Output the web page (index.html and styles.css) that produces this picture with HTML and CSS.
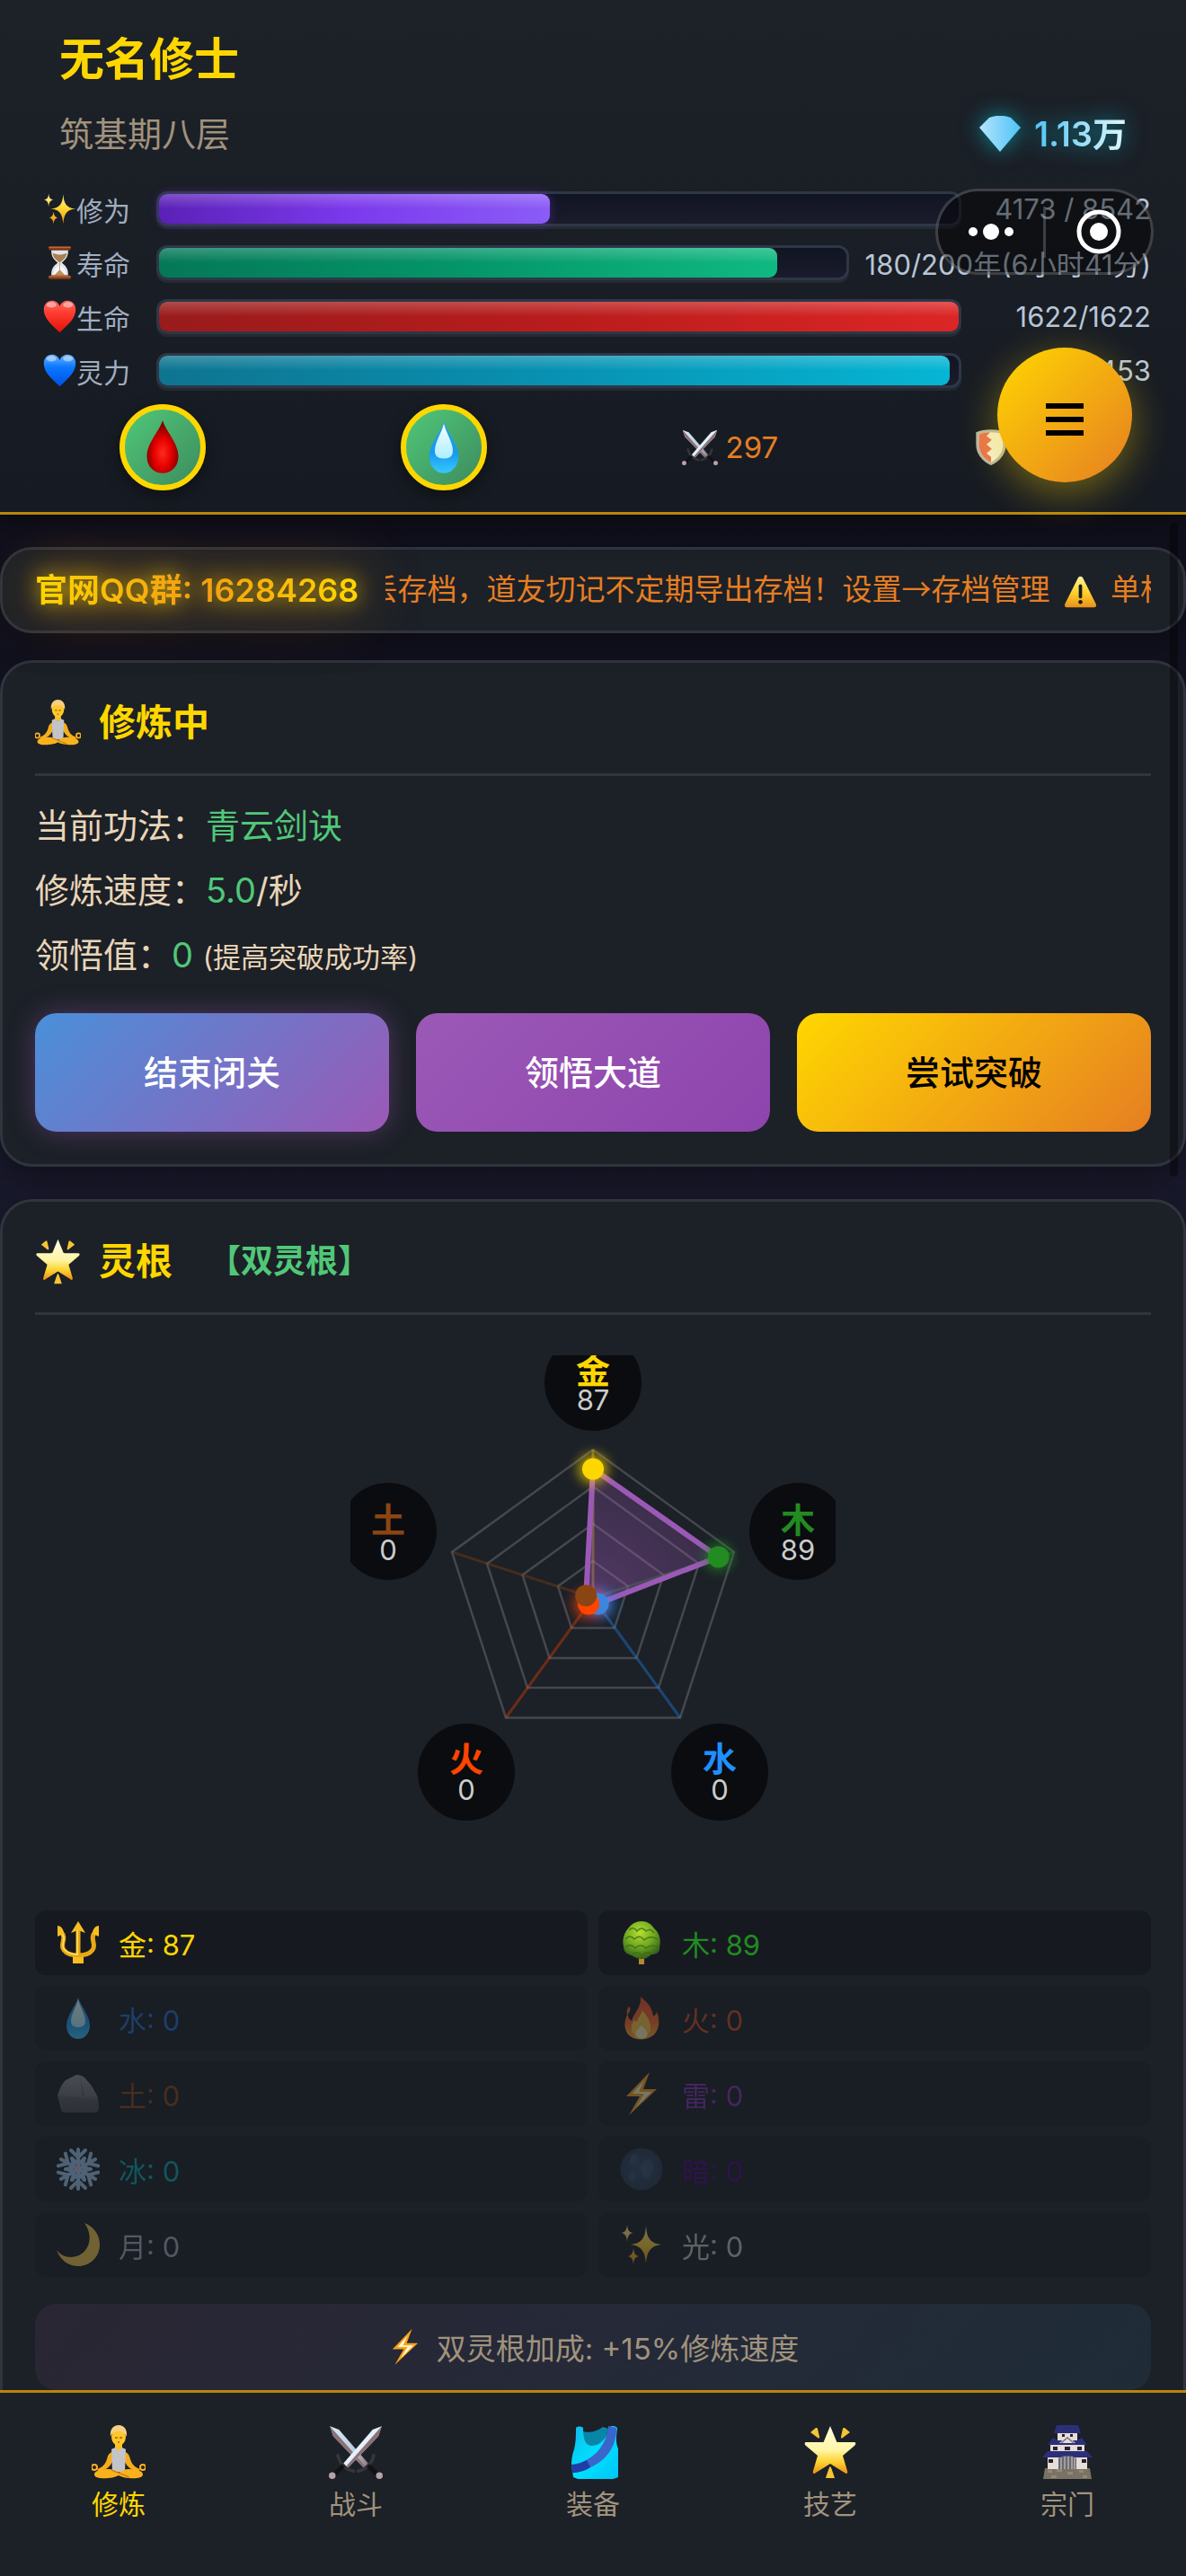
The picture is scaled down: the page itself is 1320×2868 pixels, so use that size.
FILE: index.html
```html
<!DOCTYPE html>
<html lang="zh-CN">
<head>
  <meta charset="UTF-8" />
  <meta name="viewport" content="width=device-width, initial-scale=1.0"/>
  <title>修仙</title>
  <link rel="stylesheet" href="styles.css">
</head>
<body>
  <!-- icon sprite -->
  <svg class="sprite" aria-hidden="true">
    <defs>
      <linearGradient id="gGold" x1="0" y1="0" x2="0" y2="1"><stop offset="0" stop-color="#fff3a0"/><stop offset=".5" stop-color="#ffd42e"/><stop offset="1" stop-color="#e8901a"/></linearGradient>
      <linearGradient id="gStar" x1="0" y1="0" x2="0" y2="1"><stop offset="0" stop-color="#fffbe0"/><stop offset=".5" stop-color="#fff6a8"/><stop offset=".75" stop-color="#fdd433"/><stop offset="1" stop-color="#ee8d14"/></linearGradient>
      <linearGradient id="gRed" x1="0" y1="0" x2="0" y2="1"><stop offset="0" stop-color="#ff6a60"/><stop offset=".4" stop-color="#ff3b30"/><stop offset="1" stop-color="#e01208"/></linearGradient>
      <linearGradient id="gBlue" x1="0" y1="0" x2="0" y2="1"><stop offset="0" stop-color="#6cb2ff"/><stop offset=".4" stop-color="#0a78ff"/><stop offset="1" stop-color="#0050e6"/></linearGradient>
      <radialGradient id="gBlood" cx=".5" cy=".62" r=".55"><stop offset="0" stop-color="#ff2a20"/><stop offset=".5" stop-color="#e60000"/><stop offset="1" stop-color="#7a0000"/></radialGradient>
      <linearGradient id="gWater" x1="0" y1="0" x2="0" y2="1"><stop offset="0" stop-color="#2b9fe8"/><stop offset=".6" stop-color="#1699ee"/><stop offset="1" stop-color="#38c8ff"/></linearGradient>
      <linearGradient id="gShine" x1="0" y1="0" x2="0" y2="1"><stop offset="0" stop-color="#f4ffff"/><stop offset="1" stop-color="#aeeeff"/></linearGradient>
      <linearGradient id="gGem"><stop offset="0" stop-color="#b3e5fc"/><stop offset="1" stop-color="#4fc3f7"/></linearGradient>
      <radialGradient id="gTree" cx=".45" cy=".3" r=".7"><stop offset="0" stop-color="#b4e030"/><stop offset=".55" stop-color="#6fa822"/><stop offset="1" stop-color="#34601a"/></radialGradient>
      <linearGradient id="gFire" x1="0" y1="0" x2="0" y2="1"><stop offset="0" stop-color="#f0482c"/><stop offset=".6" stop-color="#fb6a22"/><stop offset="1" stop-color="#ffb42a"/></linearGradient>
      <linearGradient id="gRock" x1="0" y1="0" x2="0" y2="1"><stop offset="0" stop-color="#8c9094"/><stop offset=".6" stop-color="#686c70"/><stop offset="1" stop-color="#4c5054"/></linearGradient>
      <radialGradient id="gMoon"><stop offset="0" stop-color="#304a68"/><stop offset="1" stop-color="#26394f"/></radialGradient>
      <linearGradient id="gVest" x1="0" y1="0" x2="1" y2="1"><stop offset="0" stop-color="#12b8e8"/><stop offset=".5" stop-color="#00e0ff"/><stop offset="1" stop-color="#00c2f5"/></linearGradient>
      <linearGradient id="gBlade"><stop offset="0" stop-color="#d8ecfa"/><stop offset=".6" stop-color="#bcd0e0"/><stop offset="1" stop-color="#8d7880"/></linearGradient>
      <radialGradient id="gRadar" cx="270" cy="270" r="165" gradientUnits="userSpaceOnUse"><stop offset="0" stop-color="#9b59b6" stop-opacity=".42"/><stop offset="1" stop-color="#9b59b6" stop-opacity=".2"/></radialGradient>
      <filter id="glow" x="-100%" y="-100%" width="300%" height="300%"><feGaussianBlur stdDeviation="7"/></filter>
    </defs>
    <symbol id="i-sparkles" viewBox="0 0 48 48">
      <path fill="url(#gGold)" d="M29 3c1 13 4 20 18 21-14 1-17 9-18 22-1-13-4-21-18-22 14-1 17-8 18-21zM8 2c.6 6 2 8.500 7 9-5 .5-6.400 4-7 10-.6-6-2-9.500-7-10 5-.5 6.400-3 7-9zM15 28c.6 5.500 2 8 6 9-4 1-5.400 3.500-6 9-.6-5.500-2-8-6-9 4-1 5.400-3.500 6-9z"/>
    </symbol>
    <symbol id="i-hourglass" viewBox="0 0 48 48">
      <path fill="#dfe3ea" d="M12 4h24c1 11-3 15-9 20 6 5 10 9 9 20H12c-1-11 3-15 9-20-6-5-10-9-9-20z"/>
      <path fill="#a87f52" d="M14 10c6 3 14 3 20 0 0 6-4 9-9 13h-2c-5-4-9-7-9-13z"/>
      <path fill="#f6f7ff" d="M16 42c-2-7 3-12 8-15 5 3 10 8 8 15z"/>
      <path fill="#c09253" d="M16 42l8-8 8 8zM23.500 22h1v14h-1z"/>
      <rect x="8" y="0" width="32" height="6" rx="2" fill="#7a3716"/><rect x="8" y="1" width="32" height="2" rx="1" fill="#bc6a3e"/>
      <rect x="8" y="42" width="32" height="6" rx="2" fill="#7a3716"/><rect x="8" y="43" width="32" height="2" rx="1" fill="#bc6a3e"/>
    </symbol>
    <symbol id="i-heart" viewBox="0 0 48 48">
      <path d="M24 47C11 35 1 26 1 14 1 6 6 1 13 1c5 0 9 3 11 8 2-5 6-8 11-8 7 0 12 5 12 13 0 12-10 21-23 33z"/>
      <ellipse cx="12" cy="7" rx="7" ry="4" fill="#fff" opacity=".45"/><ellipse cx="36" cy="7" rx="7" ry="4" fill="#fff" opacity=".45"/>
    </symbol>
    <symbol id="i-blood" viewBox="0 0 48 48"><path fill="url(#gBlood)" d="M24 0c3 10 14 20 14 32 0 9-6 15-14 15s-14-6-14-15C10 20 21 10 24 0z"/></symbol>
    <symbol id="i-water" viewBox="0 0 48 48">
      <path fill="url(#gWater)" d="M24 1c3 10 13 20 13 31 0 9-6 15-13 15s-13-6-13-15C11 21 21 11 24 1z"/>
      <path fill="url(#gShine)" d="M24 3c2 8 8 17 8 24 0 5-3 7-8 7s-8-2-8-7c0-7 6-16 8-24z"/>
    </symbol>
    <symbol id="i-swords" viewBox="0 0 48 48">
      <path fill="url(#gBlade)" d="M1 1l8 3 26 30-4 4L4 10z"/><path fill="#8d7076" d="M1 1l3 9 27 28 1-2z"/>
      <path fill="#e2f1fb" d="M47 1l-8 3-26 30 4 4L44 10z"/><path fill="#8d7076" d="M47 1l-3 9-27 28-1-2z"/>
      <path d="M8 27c2 8 6 12 14 14M40 27c-2 8-6 12-14 14" fill="none" stroke="#34363a" stroke-width="3" stroke-linecap="round"/>
      <path d="M13 36l-9 9M35 36l9 9" stroke="#101216" stroke-width="4"/>
      <circle cx="3" cy="45" r="3" fill="#b9a0a8"/><circle cx="45" cy="45" r="3" fill="#b9a0a8"/>
    </symbol>
    <symbol id="i-shield" viewBox="0 0 48 48">
      <path fill="#b8b6a4" d="M4 4C14-1 34-1 44 4v16c0 14-10 24-20 28C14 44 4 34 4 20z"/>
      <path fill="#f3eecd" d="M8 7c9-4 23-4 32 0v13c0 12-8 20-16 24C16 40 8 32 8 20z"/>
      <path fill="#e8714c" d="M8 7c5-2 9-3 15-3l-5 5 7 5-7 6 7 6-7 6 6 5v7C16 40 8 32 8 20z"/>
    </symbol>
    <symbol id="i-lotus" viewBox="0 0 60 60">
      <path fill="#f5ad1c" d="M24 30c-4 0-6 3-7 8-2 6-5 9-11 11l2 3c8-2 12-5 15-11zM36 30c4 0 6 3 7 8 2 6 5 9 11 11l-2 3c-8-2-12-5-15-11z"/>
      <path fill="#ffc01e" d="M26 18h8v10h-8z"/>
      <path fill="#c2c4c8" d="M22 27c2-1 3-2 5-2 1 4 5 4 6 0 2 0 3 1 5 2l-1 25H23z"/>
      <path fill="#f9b21d" d="M20 49c-8 0-17 1-17 6 0 6 20 5 27 1 7 4 27 5 27-1 0-5-9-6-17-6-4 0-7 3-10 4-3-1-6-4-10-4z"/>
      <path d="M22 50l20 8" stroke="#cf8411" stroke-width="1.500"/>
      <circle cx="3" cy="47" r="3" fill="none" stroke="#f9b21d" stroke-width="2"/><circle cx="57" cy="47" r="3" fill="none" stroke="#f9b21d" stroke-width="2"/>
      <ellipse cx="30" cy="13" rx="8" ry="10" fill="#ffc72c"/>
      <path fill="#f6cf83" d="M21 13c-1-8 3-13 9-13s10 5 9 13c-2-5-6-6-10-6s-7 2-8 6z"/>
      <path d="M26 14h3M31 14h3M29 19h2" stroke="#a0610c" stroke-width="1.300"/>
    </symbol>
    <symbol id="i-star" viewBox="0 0 60 60">
      <path fill="url(#gStar)" d="M30 1l7 17c0 1 1 1 2 1h17c3 0 3 2 1 4L44 34l5 17c1 3-1 4-3 2L30 43 14 53c-2 2-4 1-3-2l5-17L3 23c-2-2-2-4 1-4h17c1 0 2 0 2-1z"/>
      <path fill="#f5c535" d="M8 8l6-5c1 0 2 0 2 1l2 9c0 2-1 2-2 1zM52 8l-6-5c-1 0-2 0-2 1l-2 9c0 2 1 2 2 1zM30 46c1 0 4 10 5 13H25c1-3 4-13 5-13z"/>
    </symbol>
    <symbol id="i-trident" viewBox="0 0 48 48">
      <path d="M24 8v32M5 12c7 7-2 14 3 20 3 4 9 6 16 6s13-2 16-6c5-6-4-13 3-20" fill="none" stroke="#e9a714" stroke-width="5"/>
      <path d="M23 8v30M6 14c6 6-3 12 3 18 3 3 8 5 15 5" fill="none" stroke="#ffe46b" stroke-width="1.500"/>
      <path fill="#f7bd22" d="M24 0l8 13-8-3-8 3zM1 5c4 0 7 4 7 9l-7 3zM47 5c-4 0-7 4-7 9l7 3zM18 40h12v7H18z"/>
    </symbol>
    <symbol id="i-tree" viewBox="0 0 48 48">
      <path fill="#b8862c" d="M21 38h6v10h-6z"/>
      <path fill="url(#gTree)" d="M24 0c6 0 11 3 14 8 6 5 8 13 6 21 1 6-4 8-9 8-3 3-7 5-11 5s-8-2-11-4c-5-1-9-4-9-10C2 20 5 12 10 7c3-4 8-7 14-7z"/>
      <g fill="none" stroke="#3d6c14" stroke-width="1.500" opacity=".8"><path d="M10 10q5-5 9 1q5-6 10 0q5-4 9 2M6 20q5-6 10 0q6-6 11 1q6-6 15-1M6 29q6-5 11 1q6-6 12 0q6-5 14-1M14 37q5-5 10 1q5-5 11-2"/></g>
    </symbol>
    <symbol id="i-fire" viewBox="0 0 48 48">
      <path fill="url(#gFire)" d="M23 0c10 8 13 14 14 22 2-1 3-3 4-5 4 9 3 20-4 26-8 6-20 6-27 0-6-6-6-17-1-24 0 4 1 6 4 8 2-8 11-15 10-27zM10 11c3 3 1 6-2 9-1-4 0-7 2-9z"/>
      <path fill="#ffc93c" d="M25 15c6 8 10 14 9 22-2 9-18 11-21 1-1-5 1-9 3-12 2 3 3 2 4-1 2-4 4-6 5-10z"/>
      <path fill="#fff4b8" d="M24 32c5 5 8 8 6 12-3 4-9 4-12 0-2-4 2-8 6-12z"/>
    </symbol>
    <symbol id="i-rock" viewBox="0 0 48 48">
      <path fill="url(#gRock)" d="M10 9l12-6c3 0 7 1 9 3l7 8c3 5 6 9 8 15l1 10c0 4-2 6-4 6H8c-3-1-3-4-4-8L1 26c2-6 4-12 9-17z"/>
      <path fill="#3c4044" opacity=".35" d="M1 26l22 2 23 2 1 9c0 4-2 6-4 6H8zM27 5l4 22h-3z"/>
    </symbol>
    <symbol id="i-bolt" viewBox="0 0 48 48">
      <path fill="#f9a21c" d="M33 0L7 27h15L10 48l31-29H26z"/><path fill="#fffbd0" d="M27 9L14 24h13l-9 15 17-17H21z"/>
    </symbol>
    <symbol id="i-snow" viewBox="0 0 48 48">
      <g id="arm" stroke="#9cc4ea" stroke-width="4" stroke-linecap="round" fill="none"><path d="M24 24V2M16 3l8 8 8-8M17 12l7 7 7-7"/></g>
      <use href="#arm" transform="rotate(60 24 24)"/><use href="#arm" transform="rotate(120 24 24)"/><use href="#arm" transform="rotate(180 24 24)"/><use href="#arm" transform="rotate(240 24 24)"/><use href="#arm" transform="rotate(300 24 24)"/>
      <circle cx="24" cy="24" r="3" fill="#c9b4c4"/>
    </symbol>
    <symbol id="i-newmoon" viewBox="0 0 48 48"><circle cx="24" cy="24" r="23.500" fill="url(#gMoon)"/><path fill="#4a6888" opacity=".35" d="M13 8c6-3 9 2 7 7s-8 6-10 2zM27 15c5-4 11 0 10 7s-4 16-9 12-6-14-1-19zM12 27c4-1 6 3 5 8s-7 2-8-2z"/></symbol>
    <symbol id="i-crescent" viewBox="0 0 48 48"><path fill="#f0c648" d="M31 0c11 4 17 14 17 24 0 14-11 24-24 24C13 48 4 41 0 30c6 8 15 10 25 6 12-6 16-22 6-36z"/></symbol>
    <symbol id="i-vest" viewBox="0 0 60 60">
      <path fill="#0786a8" d="M15 5c8 5 18 3 26-3l6 2-6 22-18 3-9-9z"/>
      <path fill="url(#gVest)" d="M11 3c2-2 6-2 8 0 0 12 2 20 10 20 9 0 17-9 20-21 2-2 6-1 8 1-1 9-2 17 1 23v32c-13 6-37 6-50 0L6 44c0-6 1-12 3-17 2-8 2-16 2-24z"/>
      <path fill="#3a66cc" d="M47 1l9 2c1 27-20 46-49 50l-1-9c22-3 39-19 41-43z"/>
      <path fill="#1f3da4" d="M6 44c7 0 12-2 17-5l4 8c-6 4-13 6-20 6z"/>
    </symbol>
    <symbol id="i-castle" viewBox="0 0 60 60">
      <path fill="#7a7262" d="M5 48h50l2 12H3z"/><path fill="#e6dcd8" d="M8 34h44v15H8zM11 22h38v12H11zM19 9h22v11H19z"/>
      <path fill="#2c2f78" d="M18 0h24l3 9H15zM14 14l-6 8h44l-6-8-5 3H19zM8 29l-6 7h56l-6-7z"/>
      <path fill="#e6dcd8" d="M30 12l9 8H21z"/>
      <path d="M23 20l7-6 7 6" fill="none" stroke="#77727e" stroke-width="1.500"/>
      <path fill="#24242e" d="M24 10h3v3h-3zM33 10h3v3h-3zM14 24h5v4h-5zM27 24h6v4h-6zM41 24h5v4h-5zM9 38h5v4H9zM46 38h5v4h-5z"/>
      <path fill="#696a70" d="M20 37c5-4 15-4 20 0v12H20z"/><path d="M23 36v13M27 35v14M31 35v14M35 35v14M38 36v13" stroke="#d8d2d0" stroke-width="1"/>
      <path fill="#938875" d="M8 50h5v3H8zM18 49h6v3h-6zM30 52h6v3h-6zM43 50h5v3h-5zM12 56h6v3h-6zM47 56h5v3h-5z"/>
    </symbol>
    <symbol id="i-warn" viewBox="0 0 48 48">
      <path fill="url(#gGold)" d="M24 1c2 0 3 1 4 3l19 38c1 3 0 5-3 5H4c-3 0-4-2-3-5L20 4c1-2 2-3 4-3z"/>
      <path d="M24 15v16" stroke="#1a1a1a" stroke-width="5" stroke-linecap="round"/><circle cx="24" cy="39" r="3" fill="#1a1a1a"/>
    </symbol>
    <symbol id="i-gem" viewBox="0 0 46 40"><path fill="url(#gGem)" d="M11 2c8-3 16-3 24 0l11 11-23 27L0 13z"/></symbol>
  </svg>

  <div class="app">
    <header class="header">
      <h1 class="player-name">无名修士</h1>
      <div class="player-row">
        <span class="realm">筑基期八层</span>
        <span class="stones"><svg class="gem"><use href="#i-gem"/></svg><b>1.13万</b></span>
      </div>

      <div class="stats">
        <div class="stat">
          <span class="stat-label"><svg class="icon-sm"><use href="#i-sparkles"/></svg>修为</span>
          <div class="bar"><div class="fill exp" style="width: 48.9%"></div></div>
          <span class="stat-value">4173 / 8542</span>
        </div>
        <div class="stat">
          <span class="stat-label"><svg class="icon-sm"><use href="#i-hourglass"/></svg>寿命</span>
          <div class="bar"><div class="fill life" style="width: 90%"></div></div>
          <span class="stat-value">180/200年(6小时41分)</span>
        </div>
        <div class="stat">
          <span class="stat-label"><svg class="icon-sm red"><use href="#i-heart"/></svg>生命</span>
          <div class="bar"><div class="fill hp" style="width: 100%"></div></div>
          <span class="stat-value">1622/1622</span>
        </div>
        <div class="stat">
          <span class="stat-label"><svg class="icon-sm blue"><use href="#i-heart"/></svg>灵力</span>
          <div class="bar"><div class="fill mp" style="width: 98.9%"></div></div>
          <span class="stat-value">448/453</span>
        </div>
      </div>

      <div class="quick">
        <button class="potion" aria-label="生命药水"><svg><use href="#i-blood"/></svg></button>
        <button class="potion" aria-label="灵力药水"><svg><use href="#i-water"/></svg></button>
        <span class="attr"><svg><use href="#i-swords"/></svg>297</span>
        <span class="attr"><svg><use href="#i-shield"/></svg>148</span>
      </div>
    </header>

    <main class="main">
      <section class="notice">
        <span class="qq">官网QQ群: 16284268</span>
        <div class="ticker"><p class="ticker-text">丢存档，道友切记不定期导出存档！设置<span class="arrow">→</span>存档管理 <svg class="warn"><use href="#i-warn"/></svg> 单机游戏</p></div>
      </section>

      <section class="card">
        <h2 class="card-title"><svg class="icon-title"><use href="#i-lotus"/></svg>修炼中</h2>
        <div class="info">
          <p>当前功法：<span class="green">青云剑诀</span></p>
          <p>修炼速度：<span class="green">5.0</span>/秒</p>
          <p>领悟值：<span class="green">0</span> <small>(提高突破成功率)</small></p>
        </div>
        <div class="actions">
          <button class="btn btn-active">结束闭关</button>
          <button class="btn btn-purple">领悟大道</button>
          <button class="btn btn-gold">尝试突破</button>
        </div>
      </section>

      <section class="card">
        <h2 class="card-title"><svg class="icon-title"><use href="#i-star"/></svg>灵根<span class="root-type">【双灵根】</span></h2>

        <svg class="radar" viewBox="0 0 540 540" role="img" aria-label="灵根雷达图">
          <g fill="none" stroke="#fff" stroke-opacity=".18" stroke-width="2.500">
            <path d="M270 105L427 219L367 403.500H173L113 219z"/>
            <path d="M270 146L388 232L343 370H197L152 232z"/>
            <path d="M270 187.500L348.500 244.500L318.500 337H221.500L191.500 244.500z"/>
            <path d="M270 229L309 257L294 303.500H246L231 257z"/>
          </g>
          <g stroke-width="3" stroke-opacity=".35">
            <path d="M270 270V105" stroke="#ffd700"/><path d="M270 270L427 219" stroke="#228b22"/>
            <path d="M270 270L367 403.500" stroke="#1e90ff"/><path d="M270 270L173 403.500" stroke="#ff4500"/>
            <path d="M270 270L113 219" stroke="#8b4513"/>
          </g>
          <path d="M270 126.400L409.700 224.600L274.900 276.700L265.100 276.700L262.200 267.500z" fill="url(#gRadar)" stroke="#9b59b6" stroke-width="6" stroke-linejoin="round"/>
          <g filter="url(#glow)" opacity=".75">
            <circle cx="270" cy="126.400" r="16" fill="#ffd700"/><circle cx="409.700" cy="224.600" r="15" fill="#228b22"/>
            <circle cx="278" cy="277" r="15" fill="#1e90ff"/><circle cx="264" cy="277" r="15" fill="#ff4500"/>
          </g>
          <circle cx="270" cy="126.400" r="12" fill="#ffd700"/>
          <circle cx="409.700" cy="224.600" r="12" fill="#228b22"/>
          <circle cx="275.500" cy="276.700" r="12" fill="#3d86dd"/>
          <circle cx="265.100" cy="276.700" r="12" fill="#ff4500"/>
          <circle cx="262.200" cy="267.500" r="12" fill="#8b4513"/>
          <g fill="#0a0c0f">
            <circle cx="270" cy="30" r="54"/><circle cx="498" cy="196" r="54"/><circle cx="411" cy="464" r="54"/>
            <circle cx="129" cy="464" r="54"/><circle cx="42" cy="196" r="54"/>
          </g>
          <g class="radar-name">
            <text x="270" y="31">金</text><text x="498" y="197" class="wood">木</text>
            <text x="411" y="463" class="water">水</text><text x="129" y="463" class="fire">火</text>
            <text x="42" y="197" class="earth">土</text>
          </g>
          <g class="radar-value">
            <text x="270" y="61">87</text><text x="498" y="228">89</text><text x="411" y="495">0</text>
            <text x="129" y="495">0</text><text x="42" y="228">0</text>
          </g>
        </svg>

        <div class="roots">
          <div class="root metal"><svg><use href="#i-trident"/></svg>金: 87</div>
          <div class="root wood"><svg><use href="#i-tree"/></svg>木: 89</div>
          <div class="root off water"><svg><use href="#i-water"/></svg>水: 0</div>
          <div class="root off fire"><svg><use href="#i-fire"/></svg>火: 0</div>
          <div class="root off earth"><svg><use href="#i-rock"/></svg>土: 0</div>
          <div class="root off thunder"><svg><use href="#i-bolt"/></svg>雷: 0</div>
          <div class="root off ice"><svg><use href="#i-snow"/></svg>冰: 0</div>
          <div class="root off dark"><svg><use href="#i-newmoon"/></svg>暗: 0</div>
          <div class="root off moon"><svg><use href="#i-crescent"/></svg>月: 0</div>
          <div class="root off light"><svg><use href="#i-sparkles"/></svg>光: 0</div>
        </div>

        <div class="bonus"><svg><use href="#i-bolt"/></svg>双灵根加成: +15%修炼速度</div>
      </section>
    </main>

    <nav class="tabbar">
      <a href="#cultivate" class="tab active"><svg><use href="#i-lotus"/></svg>修炼</a>
      <a href="#battle" class="tab"><svg><use href="#i-swords"/></svg>战斗</a>
      <a href="#equip" class="tab"><svg><use href="#i-vest"/></svg>装备</a>
      <a href="#skill" class="tab"><svg><use href="#i-star"/></svg>技艺</a>
      <a href="#sect" class="tab"><svg><use href="#i-castle"/></svg>宗门</a>
    </nav>

    <div class="scroll-thumb"></div>

    <button class="menu-btn" aria-label="菜单"><span></span><span></span><span></span></button>

    <div class="capsule">
      <button aria-label="更多"><svg viewBox="0 0 54 54"><g fill="#fff"><circle cx="7" cy="27" r="5"/><circle cx="27" cy="27" r="9"/><circle cx="47" cy="27" r="5"/></g></svg></button>
      <button aria-label="关闭"><svg viewBox="0 0 54 54"><circle cx="27" cy="27" r="22" fill="none" stroke="#fff" stroke-width="5"/><circle cx="27" cy="27" r="10" fill="#fff"/></svg></button>
    </div>
  </div>
</body>
</html>
```
FILE: styles.css
```css
* {
  box-sizing: border-box;
  margin: 0;
  padding: 0;
}

body {
  background: linear-gradient(180deg, #0a0a12 0%, #1a1a2e 50%, #16213e 100%);
  color: #e8d5b7;
  font-family: Inter, "Noto Sans CJK SC", sans-serif;
  font-size: 38px;
}

button {
  border: none;
  font-family: inherit;
  cursor: pointer;
}

svg {
  flex: none;
}

.sprite {
  position: absolute;
  width: 0;
  height: 0;
}

.app {
  position: relative;
  height: 100vh;
  display: flex;
  flex-direction: column;
  overflow: hidden;
}

/* header */
.header {
  position: relative;
  z-index: 2;
  padding: 30px 24px 24px;
  background: linear-gradient(180deg, #1d2128 0%, #161a22 100%);
  border-bottom: 3px solid #b8860b;
  box-shadow: 0 6px 30px rgba(0, 0, 0, 0.5);
}

.player-name {
  padding-left: 42px;
  color: #ffd700;
  font-size: 50px;
  font-weight: 600;
  line-height: 72px;
}

.player-row {
  display: flex;
  justify-content: space-between;
  align-items: center;
  padding: 0 42px;
  margin: 17px 0 34px;
  line-height: 60px;
}

.realm {
  color: #a0937d;
}

.stones {
  display: flex;
  align-items: center;
  gap: 15px;
  filter: drop-shadow(0 0 12px rgba(0, 210, 235, 0.6));
}

.stones b {
  font-weight: 600;
  background: linear-gradient(90deg, #4fc3f7, #e0f7fa);
  -webkit-background-clip: text;
  background-clip: text;
  color: transparent;
}

.gem {
  width: 46px;
  height: 40px;
}

.stats {
  display: grid;
  gap: 21px;
  padding: 0 15px 0 24px;
}

.stat {
  display: flex;
  align-items: center;
  height: 39px;
  font-size: 31px;
}

.stat-label {
  display: flex;
  align-items: center;
  width: 126px;
  color: #a0aec0;
  font-size: 30px;
}

.icon-sm {
  width: 37px;
  height: 37px;
}

.red {
  fill: url(#gRed);
}

.blue {
  fill: url(#gBlue);
}

.bar {
  flex: 1;
  height: 39px;
  border: 3px solid #2d3748;
  border-radius: 12px;
  background: linear-gradient(180deg, #111522, #1a1b2c);
  box-shadow: 0 3px 0 rgba(255, 255, 255, 0.06);
}

.fill {
  height: 100%;
  border-radius: 9px;
}

.exp {
  background: linear-gradient(180deg, rgba(255, 255, 255, 0.22), transparent 50%), linear-gradient(90deg, #5b21b6, #7c3aed 50%, #8b5cf6);
  box-shadow: 0 0 12px rgba(124, 58, 237, 0.4);
}

.life {
  background: linear-gradient(180deg, rgba(255, 255, 255, 0.22), transparent 50%), linear-gradient(90deg, #047857, #059669 50%, #10b981);
}

.hp {
  background: linear-gradient(180deg, rgba(255, 255, 255, 0.22), transparent 50%), linear-gradient(90deg, #991b1b, #b91c1c 50%, #dc2626);
}

.mp {
  background: linear-gradient(180deg, rgba(255, 255, 255, 0.22), transparent 50%), linear-gradient(90deg, #0e7490, #0891b2 50%, #06b6d4);
}

.stat-value {
  min-width: 211px;
  padding-left: 18px;
  color: #b8c5d6;
  text-align: right;
  white-space: nowrap;
}

.quick {
  display: flex;
  justify-content: space-around;
  align-items: center;
  margin-top: 18px;
}

.potion {
  display: grid;
  place-items: center;
  width: 96px;
  height: 96px;
  border: 6px solid #ffd700;
  border-radius: 50%;
  background: linear-gradient(135deg, #50c878, #3d8b5e);
  box-shadow: 0 6px 18px rgba(0, 0, 0, 0.4);
}

.potion svg {
  width: 60px;
  height: 60px;
}

.attr {
  display: flex;
  align-items: center;
  gap: 9px;
  color: #e67e22;
  font-size: 33px;
}

.attr svg {
  width: 40px;
  height: 40px;
}

/* main */
.main {
  flex: 1;
  min-height: 0;
  padding: 36px 0;
  overflow-y: auto;
  scrollbar-width: none;
}

.notice,
.card {
  border: 3px solid #30343c;
  border-radius: 36px;
  background: #1c2027;
  box-shadow: 0 12px 30px rgba(0, 0, 0, 0.35);
}

.notice {
  position: relative;
  display: flex;
  align-items: center;
  gap: 30px;
  height: 96px;
  padding: 0 36px 6px;
  margin-bottom: 30px;
}

.card {
  padding: 36px;
  margin-bottom: 36px;
}

.qq {
  font-size: 36px;
  font-weight: 600;
  white-space: nowrap;
  background: linear-gradient(90deg, #ffd700, #f39c12, #ffd700);
  -webkit-background-clip: text;
  background-clip: text;
  color: transparent;
  filter: drop-shadow(0 0 12px rgba(255, 215, 0, 0.8)) drop-shadow(0 0 33px rgba(255, 140, 0, 0.6));
}

.ticker {
  flex: 1;
  min-width: 0;
  overflow: hidden;
}

.ticker-text {
  color: #e67e22;
  font-size: 33px;
  white-space: nowrap;
  text-indent: -20px;
}

.arrow {
  font-family: "Noto Sans CJK SC", sans-serif;
}

.warn {
  width: 41px;
  height: 36px;
  margin: 0 4px;
  vertical-align: middle;
}

.card-title {
  display: flex;
  align-items: center;
  gap: 20px;
  padding-bottom: 27px;
  border-bottom: 3px solid #30343c;
  color: #ffd700;
  font-size: 41px;
  font-weight: 600;
  line-height: 60px;
}

.icon-title {
  width: 51px;
  height: 51px;
}

.info {
  display: grid;
  gap: 12px;
  margin: 25px 0 32px;
  line-height: 60px;
}

.info small {
  font-size: 31px;
}

.green {
  color: #50c878;
}

.actions {
  display: grid;
  grid-template-columns: repeat(3, 1fr);
  gap: 30px;
}

.btn {
  height: 132px;
  padding-bottom: 6px;
  border-radius: 24px;
  color: #fff;
  font-size: 38px;
  font-weight: 500;
}

.btn-active {
  background: linear-gradient(135deg, #4a90d9, #9b59b6);
  box-shadow: 0 0 30px rgba(155, 89, 182, 0.4);
}

.btn-purple {
  background: linear-gradient(135deg, #9b59b6, #8e44ad);
}

.btn-gold {
  background: linear-gradient(135deg, #ffd700, #e67e22);
  color: #000;
}

.root-type {
  margin-left: 20px;
  color: #50c878;
  font-size: 36px;
}

.radar {
  display: block;
  width: 540px;
  height: 540px;
  margin: 45px auto 78px;
}

.radar text {
  text-anchor: middle;
}

.radar-name {
  fill: #ffd700;
  font-size: 38px;
  font-weight: 700;
}

.radar-name .wood { fill: #228b22; }
.radar-name .water { fill: #1e90ff; }
.radar-name .fire { fill: #ff4500; }
.radar-name .earth { fill: #8b4513; }

.radar-value {
  fill: #ccc;
  font-size: 31px;
}

.roots {
  display: grid;
  grid-template-columns: 1fr 1fr;
  gap: 12px;
}

.root {
  display: flex;
  align-items: center;
  gap: 21px;
  height: 72px;
  padding: 0 24px;
  border-radius: 12px;
  background: #161a20;
  font-size: 31px;
}

.root svg {
  width: 48px;
  height: 48px;
}

.off {
  opacity: 0.4;
}

.metal { color: #ffd700; }
.wood { color: #228b22; }
.water { color: #1e6fd0; }
.fire { color: #d04a1c; }
.earth { color: #8b4513; }
.thunder { color: #7d30b0; }
.ice { color: #00a8ac; }
.dark { color: #4b0082; }
.moon { color: #a9abbc; }
.light { color: #c2c4c0; }

.bonus {
  display: flex;
  justify-content: center;
  align-items: center;
  gap: 15px;
  height: 96px;
  margin-top: 30px;
  border-radius: 24px;
  background: linear-gradient(135deg, #2a2633 0%, #252938 50%, #1f2c38 100%);
  color: #a0937d;
  font-size: 33px;
}

.bonus svg {
  width: 40px;
  height: 40px;
}

/* bottom tabs */
.tabbar {
  position: relative;
  z-index: 2;
  display: flex;
  height: 207px;
  padding-top: 36px;
  border-top: 3px solid #b8860b;
  background: #1c2027;
}

.tab {
  flex: 1;
  display: flex;
  flex-direction: column;
  align-items: center;
  gap: 7px;
  color: #a0937d;
  font-size: 30px;
  line-height: 42px;
  text-decoration: none;
}

.tab svg {
  width: 60px;
  height: 60px;
}

.tab.active {
  color: #ffd700;
}

/* overlays */
.scroll-thumb {
  position: absolute;
  top: 582px;
  right: 9px;
  width: 9px;
  height: 728px;
  border-radius: 5px;
  background: rgba(0, 0, 0, 0.35);
}

.menu-btn {
  position: absolute;
  z-index: 3;
  top: 387px;
  right: 60px;
  display: flex;
  flex-direction: column;
  justify-content: center;
  align-items: center;
  gap: 9px;
  width: 150px;
  height: 150px;
  padding-top: 9px;
  border-radius: 50%;
  background: linear-gradient(135deg, #ffd700, #e67e22);
  box-shadow: 0 12px 45px rgba(255, 215, 0, 0.4);
}

.menu-btn span {
  width: 42px;
  height: 6px;
  background: #000;
}

.capsule {
  position: absolute;
  z-index: 3;
  top: 210px;
  right: 36px;
  display: flex;
  align-items: center;
  width: 243px;
  height: 96px;
  border: 3px solid rgba(255, 255, 255, 0.2);
  border-radius: 48px;
  background: rgba(0, 0, 0, 0.45);
}

.capsule button {
  flex: 1;
  display: grid;
  place-items: center;
  height: 57px;
  background: none;
}

.capsule button + button {
  border-left: 3px solid rgba(255, 255, 255, 0.2);
}

.capsule svg {
  width: 54px;
  height: 54px;
}
```
